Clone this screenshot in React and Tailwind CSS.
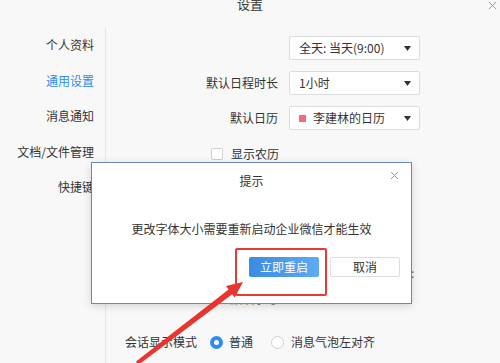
import React from "react";

const font = { fontFamily: '"Noto Sans CJK SC", "Noto Sans", sans-serif' };

const Caret = () => (
  <svg width="7" height="5" viewBox="0 0 7 5" className="shrink-0">
    <path d="M0 0 L7 0 L3.5 5 Z" fill="#333" />
  </svg>
);

const Cross = ({ size = 9, color = "#9a9a9a" }) => (
  <svg width={size} height={size} viewBox="0 0 10 10">
    <path d="M1 1 L9 9 M9 1 L1 9" stroke={color} strokeWidth="1.1" fill="none" />
  </svg>
);

const SelectRow = ({ label, children }) => (
  <div className="flex items-center h-[24px]">
    <div className="w-[183px] pr-[11px] text-right text-[12px] text-[#333]">{label}</div>
    <div className="w-[131px] h-[24px] flex items-center justify-between pl-[9px] pr-[8px] bg-white border border-[#dcdcdc] rounded-[2px] text-[12px] text-[#333]">
      <div className="flex items-center gap-[7px]">{children}</div>
      <Caret />
    </div>
  </div>
);

const menu = ["个人资料", "通用设置", "消息通知", "文档/文件管理", "快捷键"];

export default function App() {
  return (
    <div className="relative w-[500px] h-[363px] overflow-hidden bg-[#f8f8f8]" style={font}>
      {/* window title */}
      <div className="relative flex justify-center h-[28px]">
        <span className="-mt-[6px] text-[13px] leading-[20px] text-[#333]">设置</span>
        <span className="absolute right-[3px] top-[1px]">
          <Cross size={9} />
        </span>
      </div>

      <div className="flex h-[335px]">
        {/* sidebar */}
        <div className="w-[106px] shrink-0 border-r border-[#e4e4e4] pt-[7px] pr-[11px] flex flex-col items-end gap-[15.5px]">
          {menu.map((m, i) => (
            <div
              key={m}
              className={`h-[20px] leading-[20px] text-[12px] ${i === 1 ? "text-[#2d8cf0]" : "text-[#333]"}`}
            >
              {m}
            </div>
          ))}
        </div>

        {/* main */}
        <div className="flex-1 flex flex-col pt-[8px]">
          <div className="flex flex-col gap-[11px]">
            <SelectRow label="">全天: 当天(9:00)</SelectRow>
            <SelectRow label="默认日程时长">1小时</SelectRow>
            <SelectRow label="默认日历">
              <span className="w-[7px] h-[7px] bg-[#f06b82] inline-block" />
              李建林的日历
            </SelectRow>
          </div>

          <div className="flex items-center gap-[8px] ml-[105px] mt-[18px] h-[12px]">
            <span className="w-[12px] h-[12px] bg-white border border-[#d0d0d0] rounded-[2px]" />
            <span className="text-[12px] text-[#333]">显示农历</span>
          </div>

          <div className="flex items-center mt-[105px] h-[16px] pl-[305px]">
            <span className="text-[12px] text-[#666]">:</span>
          </div>

          <div className="flex items-center mt-[8px] h-[20px] pl-[124px]">
            <span className="text-[12px] text-[#777]">默认字号</span>
          </div>

          <div className="flex items-center mt-[23px] h-[20px]">
            <div className="w-[91px] text-right text-[12px] text-[#333]">会话显示模式</div>
            <span className="ml-[13px] w-[13px] h-[13px] rounded-full bg-[#2d8cf0] flex items-center justify-center">
              <span className="w-[5px] h-[5px] rounded-full bg-white" />
            </span>
            <span className="ml-[6px] text-[12px] text-[#333]">普通</span>
            <span className="ml-[18px] w-[13px] h-[13px] rounded-full bg-white border border-[#cfcfcf]" />
            <span className="ml-[7px] text-[12px] text-[#333]">消息气泡左对齐</span>
          </div>
        </div>
      </div>

      {/* dialog */}
      <div className="absolute left-[91px] top-[162px] w-[321px] h-[142px] bg-white border border-[#6a89b0] shadow-[0_2px_8px_rgba(0,0,0,0.15)] flex flex-col items-center">
        <div className="mt-[8px] text-[12px] leading-[20px] text-[#333]">提示</div>
        <span className="absolute right-[12px] top-[8px]">
          <Cross size={9} />
        </span>
        <div className="mt-[28px] text-[12px] leading-[20px] text-[#333]">更改字体大小需要重新启动企业微信才能生效</div>
        <div className="self-end flex gap-[11px] mt-[18px] mr-[11px]">
          <button className="w-[70px] h-[20px] rounded-[2px] bg-gradient-to-r from-[#3a8be2] to-[#5eabf2] text-white text-[12px] leading-[20px]">
            立即重启
          </button>
          <button className="w-[70px] h-[20px] rounded-[2px] bg-white border border-[#dedede] text-[#333] text-[12px] leading-[18px]">
            取消
          </button>
        </div>
      </div>

      {/* annotation: red box */}
      <div className="absolute left-[235px] top-[248px] w-[92px] h-[48px] border-[2.5px] border-[#e53a35] rounded-[2px]" />

      {/* annotation: arrow */}
      <svg className="absolute left-0 top-0 pointer-events-none" width="500" height="363" viewBox="0 0 500 363">
        <polygon
          points="136,361.6 228.6,289.6 226,286 243,282 234.6,297.4 232.2,294.2 138.2,365"
          fill="#e8352e"
        />
      </svg>
    </div>
  );
}
